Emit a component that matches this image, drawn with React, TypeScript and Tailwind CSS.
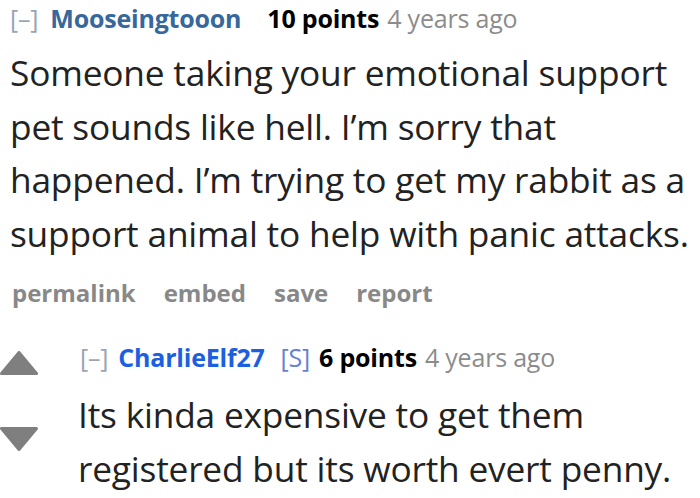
import React from 'react';

const font = { fontFamily: '"Open Sans", "Noto Sans", sans-serif' };

function Tagline({ name, points, op }: { name: string; points: string; op?: boolean }) {
  return (
    <div className="flex items-baseline text-[25px] leading-[36px] whitespace-nowrap tracking-[-0.2px]">
      <span className={`text-[#9aa4b4] ${op ? 'mr-[10px]' : 'mr-[12px]'}`}>[–]</span>
      <span className={`font-bold ${op ? 'text-[#1c5fe0] mr-[16px]' : 'text-[#36689c] mr-[26px]'}`}>{name}</span>
      {op && <span className="text-[#6a7fd0] mr-[9px]">[S]</span>}
      <span className="font-bold text-black mr-[8px]">{points}</span>
      <span className="text-[#8c8c8c]">4 years ago</span>
    </div>
  );
}

export default function App() {
  return (
    <div className="w-[700px] h-[498px] bg-white overflow-hidden" style={font}>
      <div className="pl-[10px]">
        <Tagline name="Mooseingtooon" points="10 points" />
        <p className="text-[35.3px] leading-[53.5px] text-[#222] mt-[10px] tracking-[-0.2px] whitespace-nowrap">
          Someone taking your emotional support<br />
          pet sounds like hell. I’m sorry that<br />
          happened. I’m trying to get my rabbit as a<br />
          support animal to help with panic attacks.
        </p>
        <div className="flex gap-[28px] text-[24px] leading-[34px] font-bold text-[#888] mt-[16px] pl-[2px]">
          <span>permalink</span>
          <span>embed</span>
          <span>save</span>
          <span>report</span>
        </div>
      </div>
      <div className="flex mt-[29px]">
        <div className="w-[80px] flex flex-col pt-[12px]">
          <svg width="38" height="24" viewBox="0 0 38 24">
            <path d="M19 1.5 L36.5 22.5 L1.5 22.5 Z" fill="#7f7f7f" stroke="#7f7f7f" strokeLinejoin="round" strokeWidth="3" />
          </svg>
          <svg width="38" height="24" viewBox="0 0 38 24" className="mt-[52px]">
            <path d="M1.5 1.5 L36.5 1.5 L19 22.5 Z" fill="#7f7f7f" stroke="#7f7f7f" strokeLinejoin="round" strokeWidth="3" />
          </svg>
        </div>
        <div>
          <Tagline name="CharlieElf27" points="6 points" op />
          <p className="text-[35.3px] leading-[53.5px] text-[#222] mt-[13px] -ml-[2px] tracking-[-0.2px] whitespace-nowrap">
            Its kinda expensive to get them<br />registered but its worth evert penny.
          </p>
        </div>
      </div>
    </div>
  );
}
